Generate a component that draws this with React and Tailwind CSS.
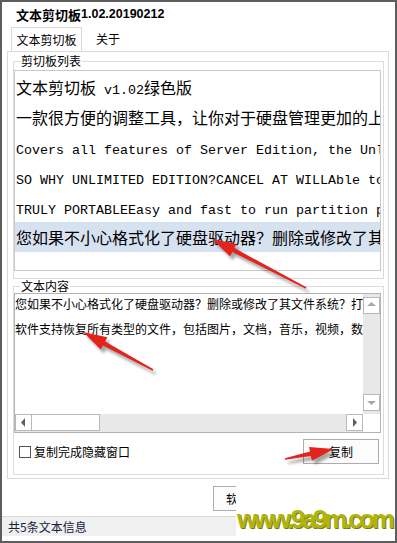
import React from "react";

const CJK = "font-['Noto_Sans_CJK_SC',sans-serif]";

const rows = [
  "文本剪切板 v1.02绿色版",
  "一款很方便的调整工具，让你对于硬盘管理更加的上手方便",
  "Covers all features of Server Edition, the Unlimited Edition",
  "SO WHY UNLIMITED EDITION?CANCEL AT WILLAble to manage",
  "TRULY PORTABLEEasy and fast to run partition programs",
  "您如果不小心格式化了硬盘驱动器？删除或修改了其文件系统？",
];

// ascii runs go in a half-width mono face, like the bitmap font in the list
function Mixed({ text }) {
  const parts = text.match(/[\x00-\x7f]+|[^\x00-\x7f]+/g) || [];
  return parts.map((p, i) =>
    /^[\x00-\x7f]/.test(p) ? (
      <span key={i} className="font-['Liberation_Mono',monospace] text-[13.33px]">
        {p}
      </span>
    ) : (
      <span key={i}>{p}</span>
    ),
  );
}

function Arrow({ x1, y1, x2, y2 }) {
  const dx = x2 - x1;
  const dy = y2 - y1;
  const len = Math.hypot(dx, dy);
  const ux = dx / len;
  const uy = dy / len;
  const px = -uy;
  const py = ux;
  const head = 24;
  const bx = x2 - ux * head;
  const by = y2 - uy * head;
  const pt = (x, y, w) => `${(x + px * w).toFixed(1)},${(y + py * w).toFixed(1)}`;
  const pts = [
    pt(x1, y1, 0.8),
    pt(bx, by, 2.2),
    pt(bx, by, 7),
    `${x2},${y2}`,
    pt(bx, by, -7),
    pt(bx, by, -2.2),
    pt(x1, y1, -0.8),
  ].join(" ");
  return (
    <g>
      <polygon points={pts} fill="#000" opacity="0.35" transform="translate(3 4)" filter="url(#blur)" />
      <polygon points={pts} fill="#e5231d" />
    </g>
  );
}

function ArrowBox({ dir, dark }) {
  const c = dark ? "#606060" : "#a8a8a8";
  const paths = {
    up: "M4 9 L8.5 5 L13 9 Z",
    down: "M4 7 L8.5 11 L13 7 Z",
    left: "M10 4 L6 8.5 L10 13 Z",
    right: "M7 4 L11 8.5 L7 13 Z",
  };
  return (
    <div className="w-[17px] h-[17px] shrink-0 bg-white border border-[#b9b9b9]">
      <svg width="15" height="15" viewBox="1 1 15 15">
        <path d={paths[dir]} fill={c} />
      </svg>
    </div>
  );
}

export default function App() {
  return (
    <div className={`relative w-[397px] h-[543px] bg-white border-2 border-[#5d5d5d] flex flex-col text-black overflow-hidden ${CJK}`}>
      {/* title */}
      <div className="h-[25px] pl-[14px] flex items-center font-bold text-[13px] leading-none">
        <span>文本剪切板</span>
        <span className="font-['Liberation_Sans',sans-serif] text-[12.5px]">1.02.20190212</span>
      </div>

      {/* tabs */}
      <div className="h-[24px] flex items-stretch text-[12px] pl-[9px]">
        <div className="w-[71px] border-l border-r border-t border-[#d9d9d9] flex items-center justify-center">
          文本剪切板
        </div>
        <div className="pl-[14px] flex items-center">关于</div>
      </div>

      {/* tab page */}
      <div className="ml-[5px] w-[382px] h-[428px] border border-[#d9d9d9] pt-[2px] px-[5px] flex flex-col text-[12px]">
        <fieldset className="min-w-0 border border-[#dcdcdc] mr-[-1px] pb-[7px] px-0">
          <legend className="ml-[6px] px-[1px] leading-[14px]">剪切板列表</legend>
          <div className="mt-[2px] ml-0 mr-[2px] h-[201px] border border-[#c9c9c9] pt-px overflow-hidden">
            {rows.map((r, i) => (
              <div
                key={r}
                className={`h-[30px] leading-[30px] pl-[1px] whitespace-pre overflow-hidden text-[16px] ${i === 5 ? "bg-[#d7e2f1]" : ""}`}
              >
                <Mixed text={r} />
              </div>
            ))}
          </div>
        </fieldset>

        <fieldset className="min-w-0 border border-[#dcdcdc] mt-0 mr-[-1px] pb-[10px]">
          <legend className="ml-[6px] px-[1px] leading-[14px]">文本内容</legend>
          <div className="mr-[2px] h-[140px] border border-[#b4b4b4] flex flex-col">
            <div className="h-[120px] flex min-w-0">
              <div className="flex-1 min-w-0 overflow-hidden pt-[3px] whitespace-nowrap">
                <div className="leading-[14px]">您如果不小心格式化了硬盘驱动器？删除或修改了其文件系统？打开</div>
                <div className="leading-[14px] mt-[11px]">软件支持恢复所有类型的文件，包括图片，文档，音乐，视频，数据</div>
              </div>
              <div className="w-[17px] shrink-0 bg-[#e8e8e8] flex flex-col justify-between py-[3px]">
                <ArrowBox dir="up" />
                <ArrowBox dir="down" />
              </div>
            </div>
            <div className="h-[18px] flex bg-[#e8e8e8] items-start">
              <ArrowBox dir="left" dark />
              <div className="w-[69px] h-[17px] bg-white border border-[#b9b9b9] ml-[-1px]" />
              <div className="flex-1" />
              <ArrowBox dir="right" dark />
              <div className="w-[17px] h-[18px] bg-white" />
            </div>
          </div>

          <div className="mt-[6px] h-[25px] flex items-center">
            <div className="ml-[5px] w-[12px] h-[12px] border border-[#555] bg-white" />
            <span className="ml-[3px]">复制完成隐藏窗口</span>
            <button className="ml-auto mr-[4px] w-[76px] h-[25px] border border-[#adadad] bg-[#fcfcfc] text-[12px]">
              复制
            </button>
          </div>
        </fieldset>
      </div>

      <div className="mt-[7px] h-[25px] pl-[211px] flex">
        <button className="w-[74px] h-[25px] border border-[#adadad] bg-[#fcfcfc] text-[12px]">软件介绍</button>
      </div>

      <div className="mt-[5px] h-[20px] border-t border-[#d9d9d9] bg-[#f0f0f0] pl-[6px] flex items-center text-[12px] text-[#13213d]">
        共5条文本信息
      </div>

      {/* watermark */}
      <div className="absolute left-[234px] top-[481px] w-[163px] h-[54px] bg-white flex items-end pb-[5px] pl-[1px]">
        <span className="font-['Liberation_Sans',sans-serif] font-bold text-[26px] leading-none tracking-[-3.3px] text-[#b2b40e] [text-shadow:1px_1px_0_#7a7c08]">
          www.9a9m.com
        </span>
      </div>

      {/* red arrows */}
      <svg className="absolute left-[-2px] top-[-2px] pointer-events-none" width="397" height="543">
        <defs>
          <filter id="blur">
            <feGaussianBlur stdDeviation="1.5" />
          </filter>
        </defs>
        <Arrow x1={306} y1={288} x2={212} y2={239} />
        <Arrow x1={153} y1={370} x2={83} y2={332} />
        <Arrow x1={285} y1={459} x2={334} y2={449} />
      </svg>
    </div>
  );
}
